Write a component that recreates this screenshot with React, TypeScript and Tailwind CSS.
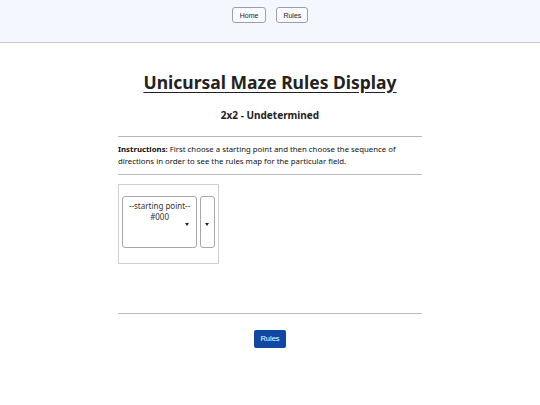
export default function App() {
  return (
    <div className="min-h-[405px] bg-white font-['Noto_Sans',sans-serif] text-[#222]">
      {/* header */}
      <header className="h-[43px] bg-[#f5f7ff] border-b border-[#c4c7d0] flex justify-center pt-[7px] gap-[10px]">
        <button className="h-[16px] px-[7px] rounded-[3px] border border-[#9aa0ab] bg-[#fafbff] text-[7px] font-['Liberation_Sans',sans-serif] text-[#222] leading-none">
          Home
        </button>
        <button className="h-[16px] px-[6px] rounded-[3px] border border-[#9aa0ab] bg-[#fafbff] text-[7px] font-['Liberation_Sans',sans-serif] text-[#222] leading-none">
          Rules
        </button>
      </header>

      <main className="w-[304px] mx-auto flex flex-col">
        <h1 className="mt-[27px] text-center text-[17.5px] font-bold underline underline-offset-[3px] leading-[24px] text-[#222]">
          Unicursal Maze Rules Display
        </h1>
        <h2 className="mt-[13px] text-center text-[10px] font-bold leading-[16px] text-[#222]">
          2x2 - Undetermined
        </h2>

        <hr className="mt-[13px] border-[#b8b8b8]" />
        <p className="mt-[6px] text-[7.8px] leading-[12px] text-[#111]">
          <span className="font-bold">Instructions: </span>First choose a starting point and then choose the sequence of directions in order to see the rules map for the particular field.
        </p>
        <hr className="mt-[7px] border-[#b8b8b8]" />

        <div className="mt-[9px] w-[101px] h-[80px] border border-[#d0d0d0] pt-[11px] px-[3px] flex gap-[3px]">
          <div className="relative w-[76px] h-[52px] border border-[#a8a8a8] rounded-[3px] text-center text-[8px] leading-[11px] pt-[3px] text-[#333]">
            <div>--starting point--</div>
            <div>#000</div>
            <span className="absolute right-[7px] top-[26px] w-0 h-0 border-l-[2.5px] border-r-[2.5px] border-t-[3px] border-l-transparent border-r-transparent border-t-[#222]" />
          </div>
          <div className="relative w-[15px] h-[52px] border border-[#a8a8a8] rounded-[3px]">
            <span className="absolute left-[4px] top-[26px] w-0 h-0 border-l-[2.5px] border-r-[2.5px] border-t-[3px] border-l-transparent border-r-transparent border-t-[#222]" />
          </div>
        </div>

        <hr className="mt-[49px] border-[#b8b8b8]" />
        <div className="mt-[16px] flex justify-center">
          <button className="h-[18px] px-[6px] rounded-[2px] bg-[#0f47a3] text-white text-[7.5px] font-['Liberation_Sans',sans-serif] leading-none">
            Rules
          </button>
        </div>
      </main>
    </div>
  );
}
